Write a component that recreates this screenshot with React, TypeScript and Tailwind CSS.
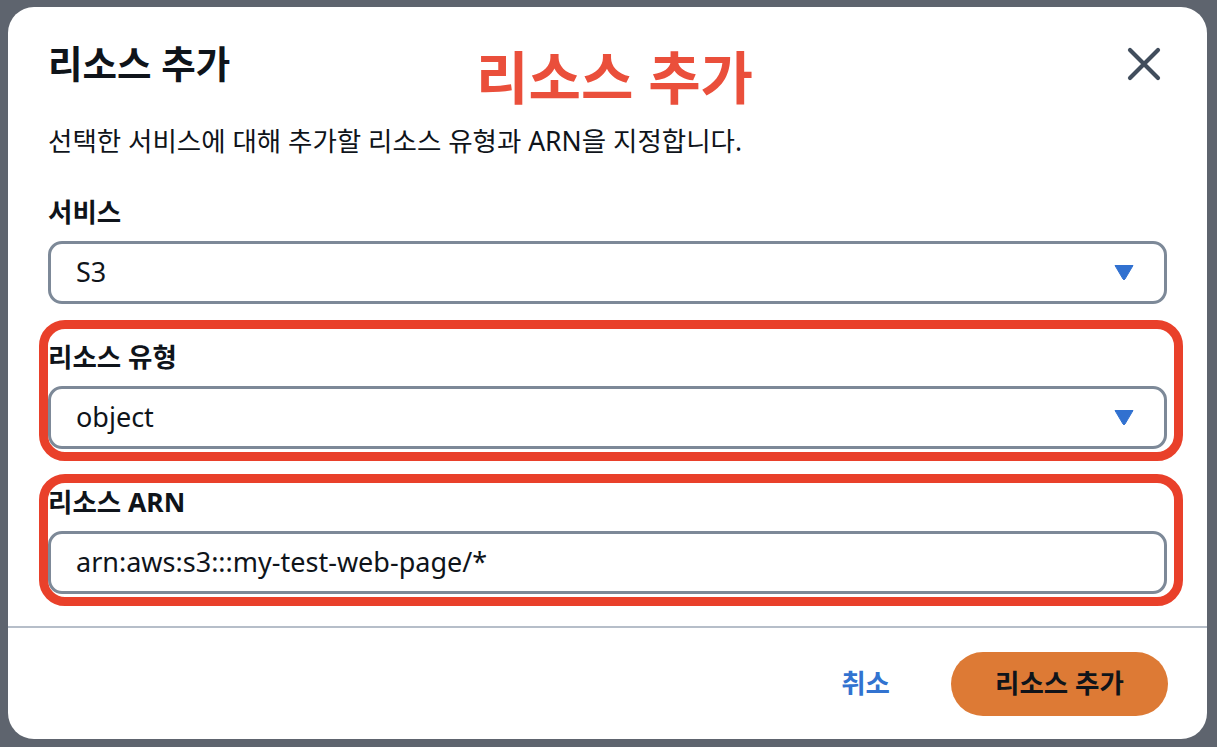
import React from 'react';

const sans = "font-['Noto_Sans','Noto_Sans_CJK_KR',sans-serif]";

function Caret() {
  return (
    <svg width="20" height="17" viewBox="0 0 20 17" className="shrink-0">
      <path d="M1 1.5 H19 L11 15 Q10 16.5 9 15 Z" fill="#3171d0" stroke="#3171d0" strokeWidth="1" strokeLinejoin="round" />
    </svg>
  );
}

function CloseIcon() {
  return (
    <svg width="34" height="34" viewBox="0 0 34 34">
      <path d="M3 3 L31 31 M31 3 L3 31" stroke="#414d5c" strokeWidth="4.2" strokeLinecap="round" />
    </svg>
  );
}

function Field({
  label,
  value,
  select,
  mark,
}: {
  label: string;
  value: string;
  select?: boolean;
  mark?: 'top' | 'bottom';
}) {
  return (
    <div className="relative">
      {/* annotation frame */}
      {mark && (
        <div
          className={`pointer-events-none absolute -left-[9px] -right-[16px] -bottom-[12px] rounded-[26px] border-[9px] border-[#e9402a] ${
            mark === 'top' ? '-top-[20px]' : '-top-[11px]'
          }`}
        />
      )}
      <div className="text-[26.5px] leading-[34px] font-bold text-[#0f141a]">{label}</div>
      <div className="mt-[12px] flex h-[63px] items-center justify-between rounded-[14px] border-[3px] border-[#7d8998] bg-white pl-[25px] pr-[30px]">
        <span className="text-[27px] text-[#0f141a]">{value}</span>
        {select && <Caret />}
      </div>
    </div>
  );
}

export default function App() {
  return (
    <div className={`h-[747px] w-full bg-[#5e646e] pl-[8px] pt-[7px] ${sans}`}>
      <div className="flex h-[732px] w-[1199px] flex-col rounded-[26px] bg-white">
        <div className="px-[40px] pt-[35px]">
          {/* header */}
          <div className="relative flex items-center justify-between">
            <h2 className="text-[37.5px] leading-[44px] font-bold text-[#0f141a]">리소스 추가</h2>
            <div className="absolute left-[428px] -top-[5px] text-[57px] leading-[80px] font-bold text-[#ea4f3b]">
              리소스 추가
            </div>
            <button className="mr-[6px] flex h-[34px] w-[34px] items-center justify-center">
              <CloseIcon />
            </button>
          </div>

          <p className="mt-[38px] text-[26.5px] leading-[34px] text-[#0f141a]">
            선택한 서비스에 대해 추가할 리소스 유형과 ARN을 지정합니다.
          </p>

          <div className="mt-[37px] flex flex-col gap-[36px]">
            <Field label="서비스" value="S3" select />
            <Field label="리소스 유형" value="object" select mark="top" />
            <Field label="리소스 ARN" value="arn:aws:s3:::my-test-web-page/*" mark="bottom" />
          </div>
        </div>

        <div className="mt-[32px] h-[2px] w-full bg-[#b6bec9]" />

        <div className="flex items-center justify-end gap-[61px] px-[39px] pt-[24px]">
          <button className="text-[26.5px] font-bold text-[#3273d0]">취소</button>
          <button className="h-[64px] w-[217px] rounded-full bg-[#dd7a35] text-[26.5px] font-bold text-[#0f141a]">
            리소스 추가
          </button>
        </div>
      </div>
    </div>
  );
}
